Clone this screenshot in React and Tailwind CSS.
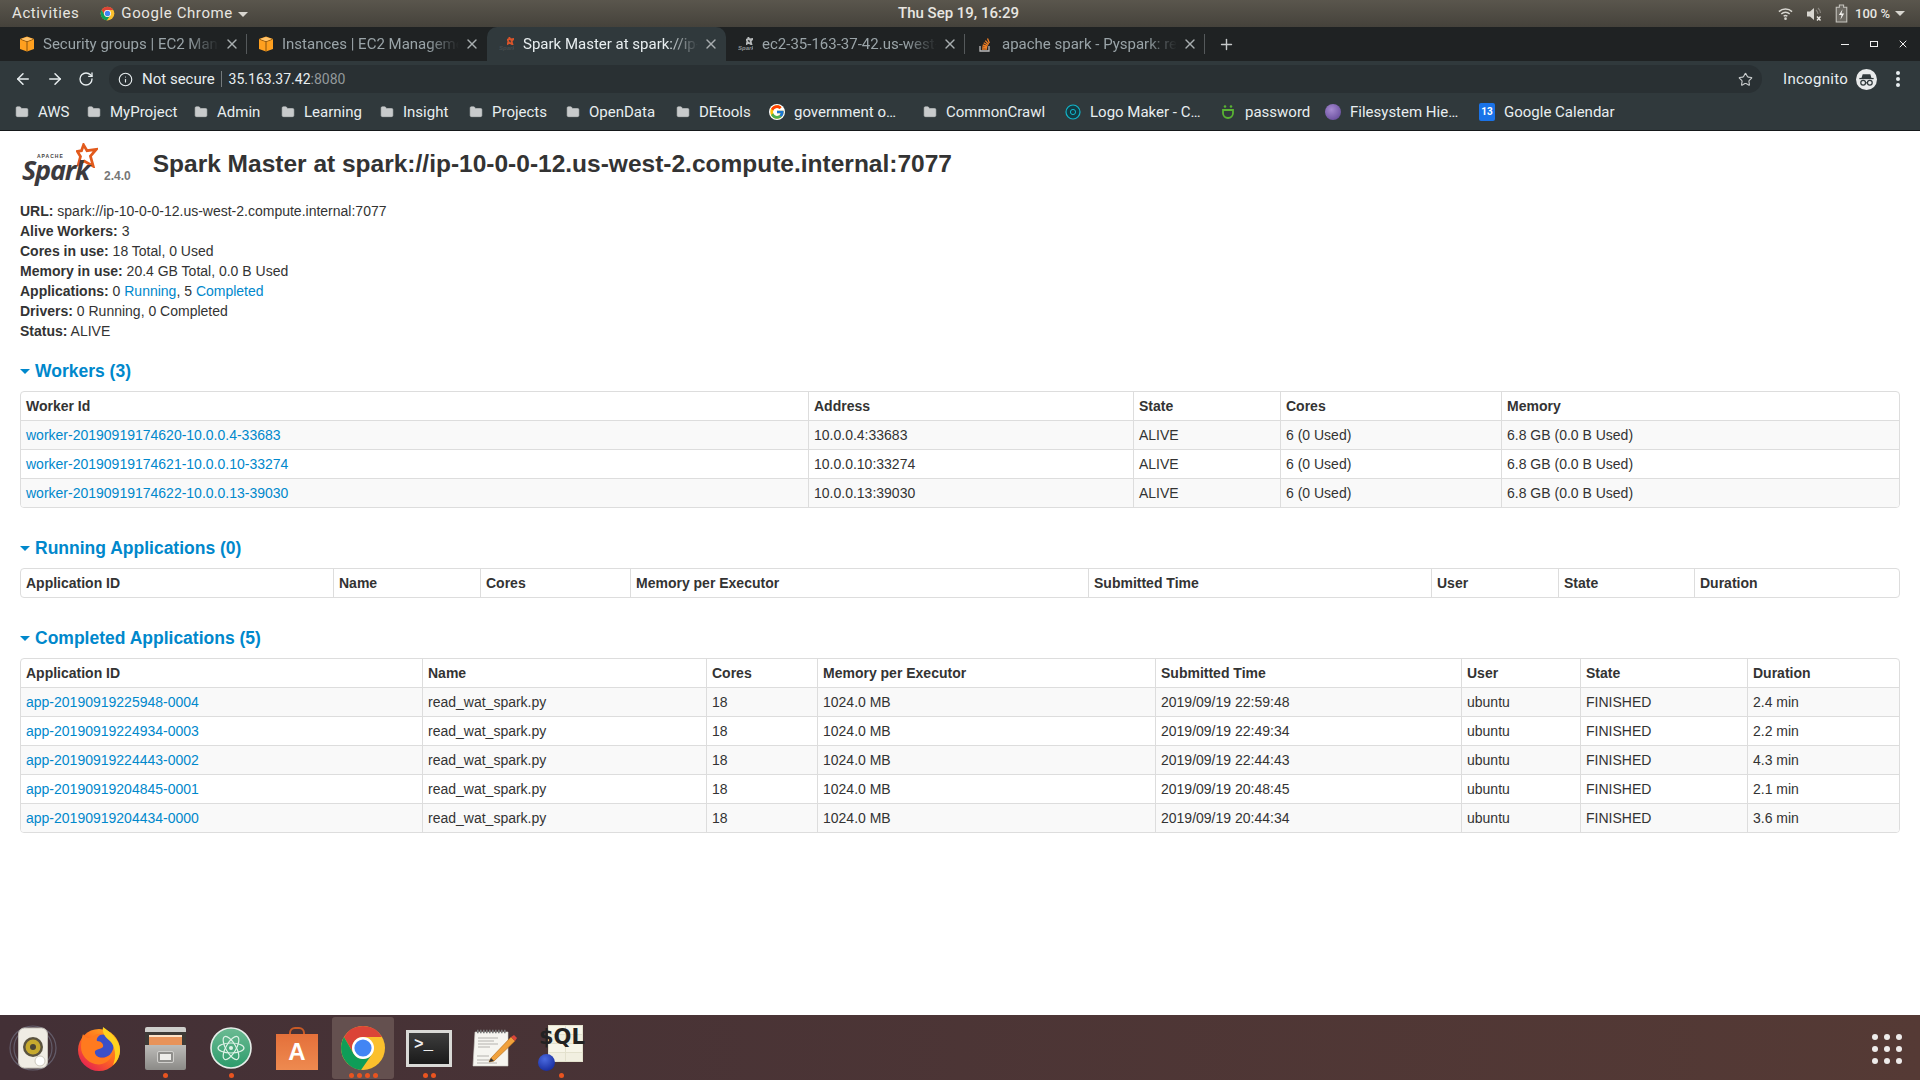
import React from 'react';
import { ArrowLeft, ArrowRight, RotateCw, Info, Star, X, Plus, Folder } from 'lucide-react';
import { FcGoogle } from 'react-icons/fc';

const ui = 'font-["Roboto",sans-serif]';

const ChromeLogo = ({ className }) => (
  <svg viewBox="0 0 48 48" className={className}>
    <circle cx="24" cy="24" r="22" fill="#fbc02d" />
    <path d="M24 2A22 22 0 0 0 5 13L14.5 29.5A11 11 0 0 1 24 13H43A22 22 0 0 0 24 2Z" fill="#db4437" />
    <path d="M5 13A22 22 0 0 0 22 45.9L33.5 29.5A11 11 0 0 1 14.5 29.5Z" fill="#0f9d58" />
    <circle cx="24" cy="24" r="11" fill="#fff" />
    <circle cx="24" cy="24" r="8.6" fill="#4285f4" />
  </svg>
);

const AwsCube = () => (
  <svg viewBox="0 0 14 16" className="w-[14px] h-[16px] shrink-0">
    <path d="M7 0.5 14 3V13L7 15.5 0 13V3Z" fill="#ffa01f" />
    <path d="M0.5 3.2 7 5.6 13.5 3.2M7 5.6V15" fill="none" stroke="#7a4a0c" strokeWidth="0.9" />
    <path d="M7 1 13 3.1 7 5.2 1 3.1Z" fill="#ffc36b" />
  </svg>
);

const SparkStar = ({ className, sw = 8, color = '#e25a1c' }) => (
  <svg viewBox="0 0 64 72" className={className}>
    <path d="M22 5 32 22 59 18 42 38 50 67 24 52 7 62 13 39 4 24 16 22Z" fill="none" stroke={color} strokeWidth={sw} strokeLinejoin="miter" />
  </svg>
);

const TabSpark = ({ active }) => (
  <div className="relative w-[15px] h-[16px] shrink-0 overflow-hidden">
    <span className={`absolute left-0 bottom-[1px] text-[6px] leading-none italic font-bold font-["Liberation_Sans",sans-serif] ${active ? 'text-[#454c4e]' : 'text-[#8f9496]'}`}>Spark</span>
    <SparkStar className="absolute right-0 top-[1px] w-[7px] h-[8px]" sw={16} color={active ? '#d9542a' : '#b7babb'} />
  </div>
);

const SoIcon = () => (
  <svg viewBox="0 0 16 16" className="w-4 h-[18px] shrink-0">
    <path d="M3 10v5h9v-5" fill="none" stroke="#bcbbbb" strokeWidth="1.3" />
    <path d="M5 13h5M5.2 11l5 .5M5.7 9l4.8 1.3M6.7 6.8l4.3 2.5M8.3 4.6l3.4 3.6M10.5 2.5l1.9 4.6" stroke="#f48024" strokeWidth="1.3" />
  </svg>
);

const tabs = [
  { title: 'Security groups | EC2 Management', icon: <AwsCube />, w: 'w-[239px]', sep: true },
  { title: 'Instances | EC2 Management Console', icon: <AwsCube />, w: 'w-[240px]' },
  { title: 'Spark Master at spark://ip-10-0-0-12', icon: <TabSpark active />, w: 'w-[239px]', active: true },
  { title: 'ec2-35-163-37-42.us-west-2.compute', icon: <TabSpark />, w: 'w-[239px]', sep: true },
  { title: 'apache spark - Pyspark: read warc', icon: <SoIcon />, w: 'w-[240px]', sep: true },
];

const bookmarks = [
  { label: 'AWS', w: 'w-[72px]' },
  { label: 'MyProject', w: 'w-[107px]' },
  { label: 'Admin', w: 'w-[87px]' },
  { label: 'Learning', w: 'w-[99px]' },
  { label: 'Insight', w: 'w-[89px]' },
  { label: 'Projects', w: 'w-[97px]' },
  { label: 'OpenData', w: 'w-[110px]' },
  { label: 'DEtools', w: 'w-[93px]' },
  { label: 'government o…', w: 'w-[154px]', icon: <FcGoogle className="w-4 h-4 shrink-0 bg-white rounded-full" /> },
  { label: 'CommonCrawl', w: 'w-[142px]' },
  {
    label: 'Logo Maker - C…',
    w: 'w-[155px]',
    icon: (
      <svg viewBox="0 0 16 16" className="w-4 h-4 shrink-0">
        <circle cx="8" cy="8" r="7" fill="#123c44" stroke="#12b5c9" strokeWidth="1.2" />
        <circle cx="8" cy="8" r="2.6" fill="none" stroke="#12b5c9" strokeWidth="1" />
      </svg>
    ),
  },
  {
    label: 'password',
    w: 'w-[105px]',
    icon: (
      <svg viewBox="0 0 16 16" className="w-4 h-4 shrink-0">
        <path d="M3 6h10v3a5 5 0 0 1-10 0Z" fill="none" stroke="#59b233" strokeWidth="1.8" />
        <circle cx="5" cy="2.5" r="1.3" fill="#59b233" />
        <circle cx="11" cy="2.5" r="1.3" fill="#59b233" />
      </svg>
    ),
  },
  { label: 'Filesystem Hie…', w: 'w-[154px]', icon: <div className="w-4 h-4 shrink-0 rounded-full bg-[radial-gradient(circle_at_40%_35%,#a58ad0,#5b4192)]" /> },
  {
    label: 'Google Calendar',
    w: 'w-[130px]',
    icon: (
      <div className="w-4 h-[18px] shrink-0 bg-[#1a73e8] rounded-[2px] flex items-center justify-center text-white text-[10px] leading-none font-bold">13</div>
    ),
  },
];

const TopBar = () => (
  <div className={`h-[27px] shrink-0 flex items-center pl-3 pr-[15px] text-[15px] text-[#e8e6e1] bg-[linear-gradient(to_bottom,#5a564d,#45423b)] ${ui}`}>
    <div className="flex-1 flex items-center tracking-[0.6px]">
      <span>Activities</span>
      <ChromeLogo className="w-[15px] h-[15px] ml-[21px] mr-[6px]" />
      <span>Google Chrome</span>
      <div className="ml-[5px] mt-[1px] w-0 h-0 border-x-[5px] border-x-transparent border-t-[5px] border-t-[#d8d6d0]" />
    </div>
    <span className="font-medium">Thu Sep 19, 16:29</span>
    <div className="flex-1 flex items-center justify-end gap-[13px] text-[13px] font-medium">
      <svg viewBox="0 0 16 16" className="w-[15px] h-[15px]">
        <path d="M1 6a10 10 0 0 1 14 0M3.5 8.5a6.5 6.5 0 0 1 9 0M6 11a3 3 0 0 1 4 0" fill="none" stroke="#d8d6d0" strokeWidth="1.5" />
        <circle cx="8" cy="13.5" r="1.4" fill="#d8d6d0" />
      </svg>
      <svg viewBox="0 0 16 16" className="w-[16px] h-[16px]">
        <path d="M1 5.5h3l4-3.5v12l-4-3.5H1Z" fill="#d8d6d0" />
        <path d="M10 4a6 6 0 0 1 2 4M12 2a8 8 0 0 1 2.5 5" fill="none" stroke="#87847c" strokeWidth="1.2" />
        <path d="M11 10.5l3.5 4M14.5 10.5 11 14.5" stroke="#e8e6e1" strokeWidth="1.4" />
      </svg>
      <svg viewBox="0 0 12 18" className="w-[13px] h-[19px]">
        <path d="M4 1h4v2h3v14H1V3h3Z" fill="#6d6a63" stroke="#c8c6c0" strokeWidth="1" />
        <path d="M7 5 3.5 10.5H6L5 15l3.5-6H6Z" fill="#f2f1ee" />
      </svg>
      <span className="-ml-[6px]">100 %</span>
      <div className="-ml-[8px] w-0 h-0 border-x-[5px] border-x-transparent border-t-[5px] border-t-[#d8d6d0]" />
    </div>
  </div>
);

const TabStrip = () => (
  <div className={`h-[34px] shrink-0 flex items-stretch pl-[8px] text-[15px] bg-[#1f2223] ${ui}`}>
    {tabs.map((t) => (
      <div
        key={t.title}
        className={`${t.w} relative flex items-center pl-[12px] pr-[7px] gap-[9px] ${t.active ? 'bg-[#30393c] text-[#e8eef0] rounded-t-[10px]' : 'text-[#9aa4a8]'}`}
      >
        {t.icon}
        <span className="flex-1 overflow-hidden whitespace-nowrap [mask-image:linear-gradient(to_right,black_82%,transparent)]">{t.title}</span>
        <X className="-ml-[4px] w-[16px] h-[16px] shrink-0 text-[#a8adaf]" strokeWidth={2} />
        {t.sep && <div className="absolute right-0 top-[7px] bottom-[7px] w-px bg-[#55595b]" />}
      </div>
    ))}
    <div className="flex items-center pl-[13px]">
      <Plus className="w-[17px] h-[17px] text-[#c6c9ca]" strokeWidth={2} />
    </div>
    <div className="flex-1 flex items-center justify-end pr-[11px]">
      <div className="w-[8px] h-px bg-[#f0f0f0]" />
      <div className="ml-[21px] w-[8px] h-[6px] border border-[#f0f0f0]" />
      <X className="ml-[19px] w-[12px] h-[12px] text-[#f0f0f0]" strokeWidth={2} />
    </div>
  </div>
);

const Toolbar = () => (
  <div className={`h-[33px] shrink-0 flex items-center bg-[#30393c] text-[#e8eef0] text-[15px] pt-[3px] ${ui}`}>
    <div className="flex items-center gap-[14px] pl-[14px] pr-[15px]">
      <ArrowLeft className="w-[18px] h-[18px]" strokeWidth={2} />
      <ArrowRight className="w-[18px] h-[18px]" strokeWidth={2} />
      <RotateCw className="w-[16px] h-[16px]" strokeWidth={2} />
    </div>
    <div className="w-[1653px] h-[28px] rounded-full bg-[#293033] flex items-center pl-[9px] pr-[9px]">
      <Info className="w-[15px] h-[15px]" strokeWidth={1.8} />
      <span className="ml-[9px]">Not secure</span>
      <div className="w-px h-[16px] bg-[#747a7c] ml-[6px] mr-[7px]" />
      <span className="text-[14px]">35.163.37.42</span>
      <span className="text-[14px] text-[#93999b]">:8080</span>
      <Star className="w-[15px] h-[15px] ml-auto text-[#c9cccd]" strokeWidth={1.8} />
    </div>
    <span className="ml-[21px] tracking-[0.3px]">Incognito</span>
    <svg viewBox="0 0 22 22" className="ml-[8px] w-[21px] h-[21px]">
      <circle cx="11" cy="11" r="11" fill="#e8eaeb" />
      <path d="M7 5.5h8l1.2 4H5.8Z" fill="#30393c" />
      <path d="M3.5 10h15" stroke="#30393c" strokeWidth="1.3" />
      <circle cx="7.5" cy="14.5" r="2.5" fill="none" stroke="#30393c" strokeWidth="1.3" />
      <circle cx="14.5" cy="14.5" r="2.5" fill="none" stroke="#30393c" strokeWidth="1.3" />
      <path d="M10 14.5h2" stroke="#30393c" strokeWidth="1.2" />
    </svg>
    <div className="ml-[19px] flex flex-col gap-[2px]">
      <div className="w-[4px] h-[4px] rounded-full bg-[#e8eef0]" />
      <div className="w-[4px] h-[4px] rounded-full bg-[#e8eef0]" />
      <div className="w-[4px] h-[4px] rounded-full bg-[#e8eef0]" />
    </div>
  </div>
);

const BookmarksBar = () => (
  <div className={`h-[37px] shrink-0 flex items-center pl-[15px] bg-[#30393c] text-[#e8eef0] text-[15px] border-b border-[#15181a] ${ui}`}>
    {bookmarks.map((b) => (
      <div key={b.label} className={`${b.w} shrink-0 flex items-center gap-[9px] whitespace-nowrap`}>
        {b.icon || <Folder className="w-[14px] h-[14px] shrink-0 text-[#c8cbcc] fill-[#c8cbcc]" strokeWidth={1} />}
        <span>{b.label}</span>
      </div>
    ))}
  </div>
);

const SparkLogo = () => (
  <div className="relative w-[78px] h-[40px] shrink-0">
    <SparkStar className="absolute left-[56px] top-0 w-[22px] h-[25px]" />
    <span className='absolute left-[17px] top-[10px] text-[5px] leading-[6px] font-bold text-[#444] tracking-[1px] font-["Liberation_Sans",sans-serif]'>APACHE</span>
    <span className='absolute left-[2px] top-[14px] text-[27px] leading-[26px] font-bold italic text-[#3c3a3e] tracking-[-1.2px] font-["Open_Sans",sans-serif]'>Spark</span>
  </div>
);

const Section = ({ title }) => (
  <h4 className="flex items-center h-5 text-[17.5px] font-bold text-[#0088cc] leading-5">
    <div className="mr-[5px] mt-[1px] w-0 h-0 border-x-[5px] border-x-transparent border-t-[5px] border-t-[#0088cc]" />
    {title}
  </h4>
);

const DataTable = ({ cols, head, rows }) => (
  <div className="mt-[10px] border border-[#ddd] rounded-[4px] overflow-hidden">
    <table className="w-full table-fixed border-separate border-spacing-0 text-[14px] leading-5">
      <colgroup>
        {cols.map((c, i) => (
          <col key={i} className={c} />
        ))}
      </colgroup>
      <thead>
        <tr>
          {head.map((h, i) => (
            <th key={h} className={`px-[5px] py-1 text-left font-bold ${i ? 'border-l border-[#ddd]' : ''}`}>
              {h}
            </th>
          ))}
        </tr>
      </thead>
      <tbody>
        {rows.map((r, ri) => (
          <tr key={r[0]} className={ri % 2 === 0 ? 'bg-[#f9f9f9]' : ''}>
            {r.map((c, i) => (
              <td key={i} className={`px-[5px] py-1 border-t border-[#ddd] ${i ? 'border-l' : 'text-[#0088cc]'}`}>
                {c}
              </td>
            ))}
          </tr>
        ))}
      </tbody>
    </table>
  </div>
);

const workers = [
  ['worker-20190919174620-10.0.0.4-33683', '10.0.0.4:33683', 'ALIVE', '6 (0 Used)', '6.8 GB (0.0 B Used)'],
  ['worker-20190919174621-10.0.0.10-33274', '10.0.0.10:33274', 'ALIVE', '6 (0 Used)', '6.8 GB (0.0 B Used)'],
  ['worker-20190919174622-10.0.0.13-39030', '10.0.0.13:39030', 'ALIVE', '6 (0 Used)', '6.8 GB (0.0 B Used)'],
];

const completed = [
  ['app-20190919225948-0004', 'read_wat_spark.py', '18', '1024.0 MB', '2019/09/19 22:59:48', 'ubuntu', 'FINISHED', '2.4 min'],
  ['app-20190919224934-0003', 'read_wat_spark.py', '18', '1024.0 MB', '2019/09/19 22:49:34', 'ubuntu', 'FINISHED', '2.2 min'],
  ['app-20190919224443-0002', 'read_wat_spark.py', '18', '1024.0 MB', '2019/09/19 22:44:43', 'ubuntu', 'FINISHED', '4.3 min'],
  ['app-20190919204845-0001', 'read_wat_spark.py', '18', '1024.0 MB', '2019/09/19 20:48:45', 'ubuntu', 'FINISHED', '2.1 min'],
  ['app-20190919204434-0000', 'read_wat_spark.py', '18', '1024.0 MB', '2019/09/19 20:44:34', 'ubuntu', 'FINISHED', '3.6 min'],
];

const appHead = ['Application ID', 'Name', 'Cores', 'Memory per Executor', 'Submitted Time', 'User', 'State', 'Duration'];

const Stat = ({ label, children }) => (
  <div>
    <strong>{label}</strong> {children}
  </div>
);

const Page = () => (
  <div className='flex-1 bg-white px-5 text-[14px] leading-5 text-[#333] overflow-hidden font-["Liberation_Sans",sans-serif]'>
    <div className="h-[70px] flex items-start pt-[12px]">
      <SparkLogo />
      <span className="ml-[6px] mt-[25px] text-[12px] leading-4 font-bold text-[#777]">2.4.0</span>
      <h3 className="ml-[22px] mt-[1px] text-[24.5px] leading-10 font-bold">Spark Master at spark://ip-10-0-0-12.us-west-2.compute.internal:7077</h3>
    </div>
    <Stat label="URL:">spark://ip-10-0-0-12.us-west-2.compute.internal:7077</Stat>
    <Stat label="Alive Workers:">3</Stat>
    <Stat label="Cores in use:">18 Total, 0 Used</Stat>
    <Stat label="Memory in use:">20.4 GB Total, 0.0 B Used</Stat>
    <Stat label="Applications:">
      0 <span className="text-[#0088cc]">Running</span>, 5 <span className="text-[#0088cc]">Completed</span>
    </Stat>
    <Stat label="Drivers:">0 Running, 0 Completed</Stat>
    <Stat label="Status:">ALIVE</Stat>

    <div className="mt-5">
      <Section title="Workers (3)" />
      <DataTable
        cols={['w-[787px]', 'w-[325px]', 'w-[147px]', 'w-[221px]', 'w-[398px]']}
        head={['Worker Id', 'Address', 'State', 'Cores', 'Memory']}
        rows={workers}
      />
    </div>
    <div className="mt-[30px]">
      <Section title="Running Applications (0)" />
      <DataTable
        cols={['w-[312px]', 'w-[147px]', 'w-[150px]', 'w-[458px]', 'w-[343px]', 'w-[127px]', 'w-[136px]', 'w-[205px]']}
        head={appHead}
        rows={[]}
      />
    </div>
    <div className="mt-[30px]">
      <Section title="Completed Applications (5)" />
      <DataTable
        cols={['w-[401px]', 'w-[284px]', 'w-[111px]', 'w-[338px]', 'w-[306px]', 'w-[119px]', 'w-[167px]', 'w-[152px]']}
        head={appHead}
        rows={completed}
      />
    </div>
  </div>
);

const SpeakerIcon = () => (
  <svg viewBox="0 0 48 50" className="w-[48px] h-[50px]">
    <g fill="none" stroke="#77798c" strokeWidth="1.2" opacity="0.6">
      <ellipse cx="24" cy="25" rx="23" ry="22" />
      <ellipse cx="24" cy="25" rx="19" ry="20" />
    </g>
    <rect x="9.5" y="5" width="29" height="40" rx="6" fill="#efece4" />
    <rect x="9.5" y="5" width="29" height="40" rx="6" fill="none" stroke="#c4c1b8" />
    <circle cx="24" cy="24" r="10" fill="#5a5340" />
    <circle cx="24" cy="24" r="7.5" fill="#c6a92e" />
    <circle cx="24" cy="24" r="3" fill="#4a4436" />
    <circle cx="31" cy="38" r="5" fill="#fff" stroke="#ccc8bd" />
  </svg>
);

const FirefoxIcon = () => (
  <svg viewBox="0 0 44 45" className="w-[44px] h-[45px]">
    <defs>
      <linearGradient id="ff" x1="0.9" y1="0" x2="0.1" y2="1">
        <stop offset="0" stopColor="#ffb21f" />
        <stop offset="0.5" stopColor="#ff6a1f" />
        <stop offset="1" stopColor="#e0155a" />
      </linearGradient>
    </defs>
    <circle cx="22" cy="24" r="21" fill="url(#ff)" />
    <circle cx="25" cy="20" r="11.5" fill="#3a4fc8" />
    <path d="M26 1C33 6 43 14 43 24 43 30 40 36 36 39 40 30 38 20 33 15 28 11 25 7 26 1Z" fill="#ffd21f" />
    <path d="M6 8C8 12 12 13 15 11 18 8 22 7 26 8 22 9 19 12 20 15 24 15 27 18 26 21 24 23 20 23 18 25 17 29 22 33 27 32 31 31 34 29 36 27 34 35 26 40 18 38 10 36 4 29 4 21 4 16 5 11 6 8Z" fill="#ff7a1f" />
  </svg>
);

const FilesIcon = () => (
  <div className="w-[41px] h-[43px] flex flex-col rounded-[2px] overflow-hidden">
    <div className="h-[5px] bg-[#cfcfcc]" />
    <div className="h-[13px] bg-[#3d3a37] px-[4px] pt-[3px]">
      <div className="h-[10px] bg-[#e8935a] border-t-2 border-[#fbe2c8]" />
    </div>
    <div className="flex-1 bg-[linear-gradient(to_bottom,#bdbcb9,#8b8a87)] flex items-center justify-center">
      <div className="w-[15px] h-[10px] rounded-[1px] bg-[#eeedea] border-2 border-[#8f8e8b] outline outline-1 outline-[#d0cfcc]" />
    </div>
  </div>
);

const AtomIcon = () => (
  <svg viewBox="0 0 42 42" className="w-[42px] h-[42px]">
    <defs>
      <linearGradient id="atomg" x1="0" y1="0" x2="0" y2="1">
        <stop offset="0" stopColor="#6cbb93" />
        <stop offset="1" stopColor="#2c9b6b" />
      </linearGradient>
    </defs>
    <circle cx="21" cy="21" r="20" fill="url(#atomg)" stroke="#e6eee9" strokeWidth="1.6" />
    <g fill="none" stroke="#dff2e7" strokeWidth="1.2">
      <ellipse cx="21" cy="21" rx="13" ry="5" transform="rotate(60 21 21)" />
      <ellipse cx="21" cy="21" rx="13" ry="5" transform="rotate(120 21 21)" />
      <ellipse cx="21" cy="21" rx="13" ry="5" />
    </g>
    <circle cx="21" cy="21" r="2" fill="#dff2e7" />
  </svg>
);

const StoreIcon = () => (
  <div className="relative w-[42px] h-[43px]">
    <div className="absolute left-[13px] top-0 w-[16px] h-[14px] border-2 border-[#c85a26] rounded-t-[6px]" />
    <div className='absolute left-0 right-0 bottom-0 h-[36px] bg-[linear-gradient(to_bottom,#e4703a,#ee8a50)] flex items-center justify-center text-white text-[24px] font-bold font-["Liberation_Sans",sans-serif]'>A</div>
  </div>
);

const TerminalIcon = () => (
  <div className="w-[46px] h-[37px] bg-[#d9d9d6] p-[3px]">
    <div className='w-full h-full bg-[linear-gradient(to_bottom,#3d3d3d,#1a1a1a)] px-[5px] pt-[3px] text-[#eee] text-[16px] leading-[18px] font-bold font-["Liberation_Mono",monospace]'>&gt;_</div>
  </div>
);

const NotepadIcon = () => (
  <svg viewBox="0 0 46 38" className="w-[46px] h-[38px]">
    <path d="M3 3H36V37H1Z" fill="#f6f5f0" stroke="#cfcec8" strokeWidth="0.6" />
    <path d="M5 2.5h30" stroke="#777" strokeWidth="3.5" strokeDasharray="1.6 1.4" />
    <path d="M6 9h20M6 12h16M6 15h20M6 18h12M5 27h12M5 31h14M5 34h20" stroke="#adaca6" strokeWidth="0.9" />
    <path d="M19 29 39 8l4 4-21 20-5 1Z" fill="#f0a13c" stroke="#b06a17" strokeWidth="0.6" />
    <path d="M39 8l4 4 2-3-3-3Z" fill="#d9463a" />
    <path d="M17 33l2-4 3 3Z" fill="#333" />
  </svg>
);

const SqlIcon = () => (
  <div className="relative w-[46px] h-[46px]">
    <div className="absolute left-[10px] top-0 w-[35px] h-[37px] bg-[#e3e1cd] grid grid-cols-2 grid-rows-4 gap-px p-px">
      <div className="bg-[#f7f5e8]" />
      <div className="bg-[#f7f5e8]" />
      <div className="bg-[#f1efe0]" />
      <div className="bg-[#f1efe0]" />
      <div className="bg-[#f7f5e8]" />
      <div className="bg-[#f7f5e8]" />
      <div className="bg-[#f1efe0]" />
      <div className="bg-[#f1efe0]" />
    </div>
    <span className='absolute left-[1px] top-0 text-[21px] leading-[24px] font-bold font-["DejaVu_Sans",sans-serif] text-[#222]'>$QL</span>
    <div className="absolute left-0 bottom-0 w-[17px] h-[17px] rounded-full bg-[radial-gradient(circle_at_40%_30%,#4a6ae0,#0b1c8c)]" />
  </div>
);

const dock = [
  { key: 'speaker', icon: <SpeakerIcon />, dots: 0 },
  { key: 'firefox', icon: <FirefoxIcon />, dots: 0 },
  { key: 'files', icon: <FilesIcon />, dots: 1 },
  { key: 'atom', icon: <AtomIcon />, dots: 1 },
  { key: 'store', icon: <StoreIcon />, dots: 0 },
  { key: 'chrome', icon: <ChromeLogo className="w-[48px] h-[48px]" />, dots: 4, active: true },
  { key: 'terminal', icon: <TerminalIcon />, dots: 2 },
  { key: 'notepad', icon: <NotepadIcon />, dots: 0 },
  { key: 'sql', icon: <SqlIcon />, dots: 1 },
];

const Dock = () => (
  <div className="h-[65px] shrink-0 flex items-stretch bg-[linear-gradient(to_right,#433036,#553a35)] pt-[2px] pb-px">
    {dock.map((d) => (
      <div key={d.key} className="w-[66px] flex items-center justify-center">
        <div className={`relative w-[62px] h-full rounded-[3px] flex items-center justify-center ${d.active ? 'bg-[#64504f]' : ''}`}>
          {d.icon}
          {d.dots > 0 && (
            <div className="absolute bottom-[1px] left-0 right-0 flex justify-center gap-[3px]">
              {Array.from({ length: d.dots }).map((_, i) => (
                <div key={i} className="w-[5px] h-[5px] rounded-full bg-[#e95420]" />
              ))}
            </div>
          )}
        </div>
      </div>
    ))}
    <div className="ml-auto pr-[18px] self-center grid grid-cols-3 gap-[6px] mt-[2px]">
      {Array.from({ length: 9 }).map((_, i) => (
        <div key={i} className="w-[6px] h-[6px] rounded-full bg-[#eeeceb]" />
      ))}
    </div>
  </div>
);

export default function App() {
  return (
    <div className="h-screen w-full flex flex-col overflow-hidden">
      <TopBar />
      <TabStrip />
      <Toolbar />
      <BookmarksBar />
      <Page />
      <Dock />
    </div>
  );
}
